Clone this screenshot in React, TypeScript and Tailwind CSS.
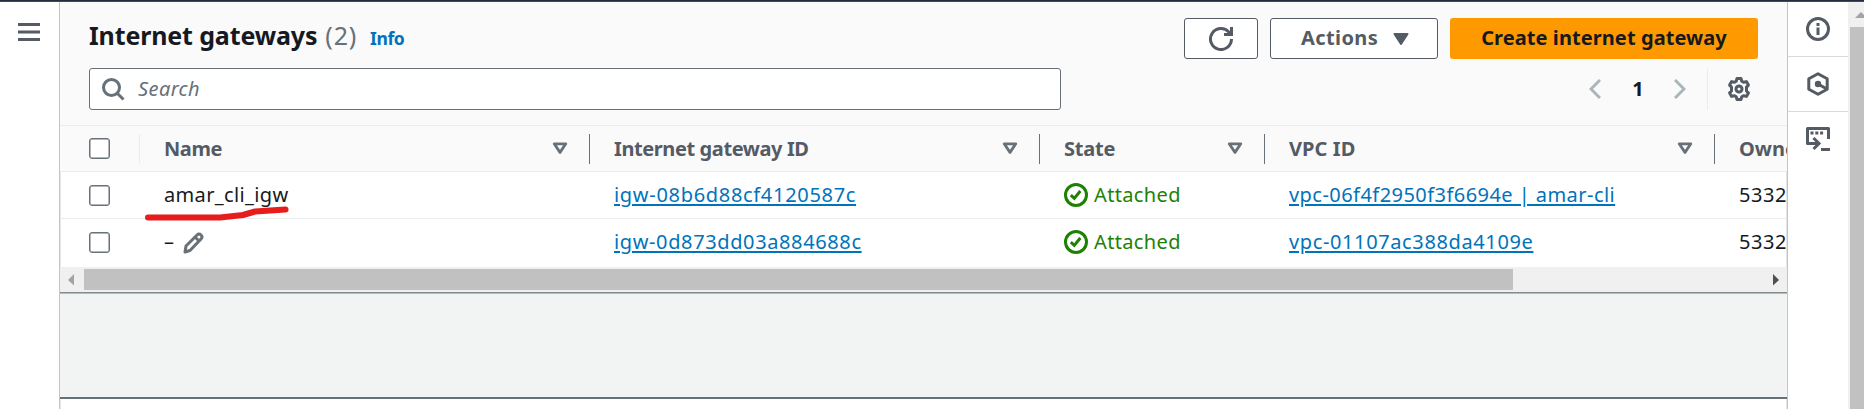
import React from "react";

const FilterIcon = () => (
  <svg width="16" height="13" viewBox="0 0 16 13" className="shrink-0">
    <path d="M2.2 1.8h11.6L8 10.4z" fill="none" stroke="#687078" strokeWidth="2.8" strokeLinejoin="round" />
  </svg>
);

const CheckBox = () => (
  <span className="block size-[21px] rounded-[3px] border border-[#687078] bg-white shadow-[inset_0_0_0_0.5px_#687078]" />
);

const Attached = () => (
  <span className="flex items-center text-[#1d8102]">
    <svg width="24" height="24" viewBox="0 0 24 24" className="mr-1.5 shrink-0" fill="none" stroke="#1d8102" strokeWidth="3">
      <circle cx="12" cy="12" r="10.5" />
      <path d="M6.8 12.2l3.5 3.2 6-7.4" />
    </svg>
    <span className="tracking-[0.35px]">Attached</span>
  </span>
);

const GRID = "grid grid-cols-[80px_450px_450px_225px_450px_260px]";

function HeadCell({ label, track }: { label: string; track: string }) {
  return (
    <div className="flex h-[30px] items-center justify-between border-r border-[#687078] pl-6 pr-[21px]">
      <span className={track}>{label}</span>
      <FilterIcon />
    </div>
  );
}

const link = "text-[#0073bb] underline decoration-2 underline-offset-[2px]";

export default function App() {
  return (
    <div className="flex h-[409px] w-[1864px] flex-col overflow-hidden bg-white font-['Noto_Sans','Open_Sans',sans-serif] text-[20px] leading-[30px] text-[#16191f]">
      <div className="h-0.5 shrink-0 border-b border-[#414a5c] bg-[#232f3e]" />
      <div className="flex min-h-0 flex-1">
        <nav className="w-[59px] shrink-0 pl-[18px] pt-[21px]">
          <svg width="22" height="18" viewBox="0 0 22 18" fill="#545b64">
            <path d="M0 0h22v3H0zM0 7.5h22v3H0zM0 15h22v3H0z" />
          </svg>
        </nav>
        <main className="flex w-[1729px] shrink-0 flex-col overflow-hidden border-x border-[#bfc6c6] shadow-[inset_1px_0_0_#e6e9e9,inset_-1px_0_0_#e3e6e6]">
          <div className="h-[124px] shrink-0 border-b border-[#eaeded] bg-[#fafafa] px-[29px]">
            <div className="flex h-[66px] items-start pt-4">
              <h1 className="flex flex-1 items-baseline pt-0.5">
                <span className="text-[25px] font-bold tracking-[-0.14px]">Internet gateways</span>
                <span className="ml-2 text-[25px] tracking-[0.8px] text-[#687078]">(2)</span>
                <span className="ml-[13px] text-[17.5px] font-bold tracking-[-0.4px] text-[#0073bb]">Info</span>
              </h1>
              <div className="flex gap-3 font-bold">
                <button className="flex h-[41px] w-[74px] items-center justify-center rounded-[3px] border border-[#545b64] bg-white">
                  <svg width="24" height="24" viewBox="0 0 24 24" fill="none" stroke="#545b64" strokeWidth="3">
                    <path d="M22.5 12A10.5 10.5 0 1 1 19.8 5l2 2" />
                    <path d="M15 7.5h7.5V0" />
                  </svg>
                </button>
                <button className="flex h-[41px] w-[168px] items-center justify-between rounded-[3px] border border-[#545b64] bg-white pl-[30px] pr-[28px] text-[#545b64]">
                  <span className="pb-0.5 tracking-[0.4px]">Actions</span>
                  <svg width="16" height="12" viewBox="0 0 16 12" fill="#545b64" stroke="#545b64" strokeWidth="2" strokeLinejoin="round">
                    <path d="M1.5 1h13L8 11z" />
                  </svg>
                </button>
                <button className="flex h-[41px] w-[308px] items-center justify-center rounded-[3px] bg-[#ff9900]">
                  <span className="pb-0.5 tracking-[0.08px]">Create internet gateway</span>
                </button>
              </div>
            </div>
            <div className="flex justify-between">
              <div className="flex h-[42px] w-[972px] items-center rounded-[3px] border border-[#687078] bg-white pl-3">
                <svg width="23" height="23" viewBox="0 0 23 23" fill="none" stroke="#687078" strokeWidth="3">
                  <circle cx="9.5" cy="9.5" r="8" />
                  <path d="M15 15l6.5 6.5" />
                </svg>
                <span className="ml-[13px] italic tracking-[0.4px] text-[#687078]">Search</span>
              </div>
              <div className="flex h-[42px] items-center">
                <svg width="12" height="20" viewBox="0 0 12 20" fill="none" stroke="#aab7b8" strokeWidth="3">
                  <path d="M11 1L2 10l9 9" />
                </svg>
                <span className="w-[73px] pl-px text-center font-bold">1</span>
                <svg width="12" height="20" viewBox="0 0 12 20" fill="none" stroke="#aab7b8" strokeWidth="3">
                  <path d="M1 1l9 9-9 9" />
                </svg>
                <span className="ml-[21px] h-[41px] w-px bg-[#eaeded]" />
                <svg width="24" height="24" viewBox="0 0 24 24" className="ml-[19px] mr-[7px]" fill="none" stroke="#545b64" strokeWidth="3" strokeLinejoin="round">
                  <path d="M10 1.5h4l.8 2.8 1.7 1 2.900-.7 2 3.500-1.900 2v3.800l1.900 2-2 3.500-2.900-.7-1.700 1-.8 2.800h-4l-.8-2.800-1.700-1-2.900.7-2-3.500 1.900-2v-3.800l-1.900-2 2-3.500 2.900.7 1.700-1z" />
                  <circle cx="12" cy="12" r="3" />
                </svg>
              </div>
            </div>
          </div>
          <div className={GRID + " h-[46px] shrink-0 items-center border-b border-[#eaeded] bg-[#fafafa] font-bold text-[#545b64]"}>
            <div className="flex h-[30px] items-center border-r border-[#eaeded] pl-[29px]"><CheckBox /></div>
            <HeadCell label="Name" track="tracking-[-0.4px]" />
            <HeadCell label="Internet gateway ID" track="tracking-[-0.4px]" />
            <HeadCell label="State" track="tracking-[-0.2px]" />
            <HeadCell label="VPC ID" track="tracking-[0.1px]" />
            <div className="pl-6">Owner</div>
          </div>
          <div className={GRID + " h-[47px] shrink-0 items-center border-b border-[#eaeded]"}>
            <div className="pl-[29px]"><CheckBox /></div>
            <div className="relative pl-6 tracking-[0.35px]">
              amar_cli_igw
              <svg width="150" height="16" viewBox="0 0 150 16" className="absolute left-0 top-[26px]" fill="none" stroke="#e71d1d" strokeWidth="6" strokeLinecap="round" strokeLinejoin="round">
                <path d="M8 11.5H80L103 9l12-3.5 30.5-2" />
              </svg>
            </div>
            <div className="pl-6 tracking-[0.69px]"><span className={link}>igw-08b6d88cf4120587c</span></div>
            <div className="pl-6"><Attached /></div>
            <div className="pl-6 tracking-[0.45px]"><span className={link}>vpc-06f4f2950f3f6694e | amar-cli</span></div>
            <div className="pl-6 tracking-[0.6px]">5332</div>
          </div>
          <div className={GRID + " h-[48px] shrink-0 items-center pb-0.5"}>
            <div className="pl-[29px]"><CheckBox /></div>
            <div className="flex items-center pl-6">
              –
              <svg width="21" height="22" viewBox="0 0 21 22" className="ml-[9px] mt-0.5" fill="none" stroke="#687078" strokeWidth="3" strokeLinejoin="round">
                <path d="M2 20l1-6L14 3q2-2 4 0t0 4L7 18.5z" />
                <path d="M12 5l4 4" />
              </svg>
            </div>
            <div className="pl-6 tracking-[0.62px]"><span className={link}>igw-0d873dd03a884688c</span></div>
            <div className="pl-6"><Attached /></div>
            <div className="pl-6 tracking-[0.62px]"><span className={link}>vpc-01107ac388da4109e</span></div>
            <div className="pl-6 tracking-[0.6px]">5332</div>
          </div>
          <div className="flex h-[25px] shrink-0 items-center bg-[#f0f0f0]">
            <svg width="24" height="12" viewBox="0 0 24 12" fill="#a3a3a3"><path d="M14 0v11.5L8 6z" /></svg>
            <div className="h-[21px] w-[1429px] bg-[#c1c1c1]" />
            <svg width="10" height="12" viewBox="0 0 10 12" className="ml-[258px]" fill="#505050"><path d="M2 0v11.5L8 6z" /></svg>
          </div>
          <div className="h-[105px] shrink-0 border-t border-[#7f8c90] bg-[#f2f3f3] shadow-[inset_0_1px_0_#b5bcbd]" />
          <div className="h-0.5 shrink-0 bg-[#687078]" />
        </main>
        <aside className="w-[60px] shrink-0">
          <div className="flex h-[55px] justify-center border-b border-[#d5dbdb] pt-[15px]">
            <svg width="24" height="24" viewBox="0 0 24 24" fill="none" stroke="#545b64" strokeWidth="3">
              <circle cx="12" cy="12" r="10.5" />
              <path d="M12 6v3M12 10.5v7.5" />
            </svg>
          </div>
          <div className="flex h-[55px] justify-center border-b border-[#d5dbdb] pt-[15px]">
            <svg width="24" height="24" viewBox="0 0 24 24" fill="none" stroke="#545b64" strokeWidth="3" strokeLinejoin="round">
              <path d="M12 1.8l9.2 5v10.400l-9.200 5-9.200-5V6.800z" />
              <path d="M12 12l8 4.500" />
              <circle cx="12" cy="12" r="1.7" fill="#545b64" />
            </svg>
          </div>
          <div className="flex justify-center pt-[15px]">
            <svg width="24" height="24" viewBox="0 0 24 24" fill="none" stroke="#545b64" strokeWidth="3">
              <path d="M22.5 12V1.5h-21v15H12" strokeLinejoin="round" />
              <path d="M7.5 11l5.5 5.5L7.5 22" />
              <path d="M15 22.5h9" />
              <path d="M4.5 6h13" strokeDasharray="3 1.8" />
            </svg>
          </div>
        </aside>
        <div className="flex w-4 flex-col bg-[#f0f0f0]">
          <div className="h-[25px] shrink-0 overflow-hidden pl-[7px]">
            <svg width="12" height="16" viewBox="0 0 12 16" fill="#a3a3a3"><path d="M0 16L6 10l6 6z" /></svg>
          </div>
          <div className="ml-0.5 flex-1 bg-[#c1c1c1]" />
        </div>
      </div>
    </div>
  );
}
